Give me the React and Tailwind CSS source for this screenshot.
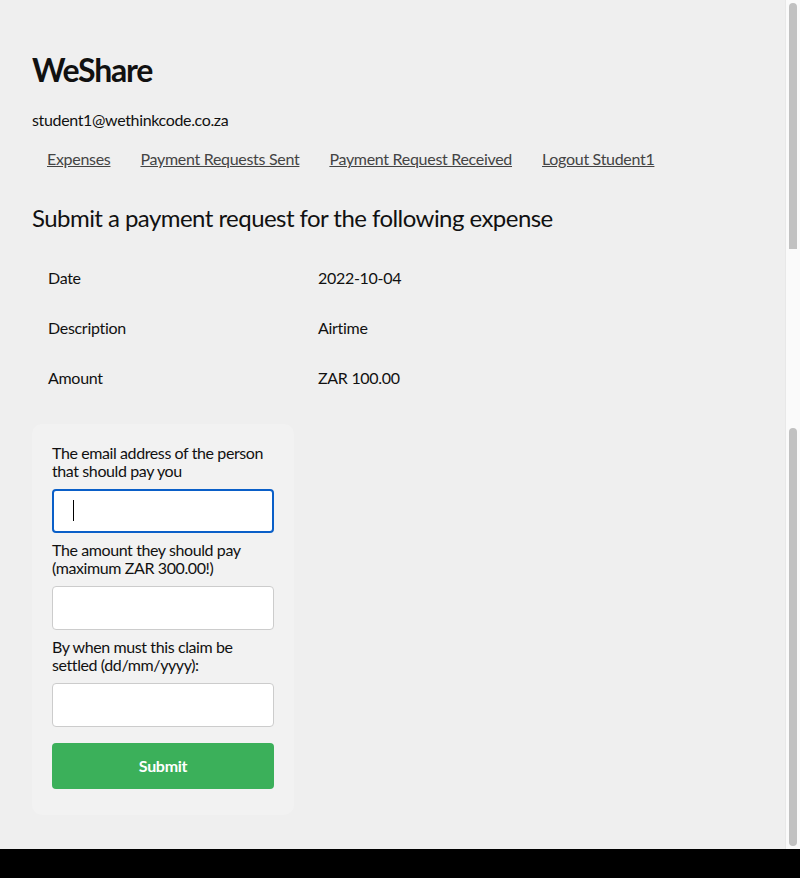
import React from 'react'

const FONT = { fontFamily: '"Lato", "Noto Sans", sans-serif' }

const rows = [
  ['Date', '2022-10-04'],
  ['Description', 'Airtime'],
  ['Amount', 'ZAR 100.00'],
]

const links = ['Expenses', 'Payment Requests Sent', 'Payment Request Received', 'Logout Student1']

function Field({ label, focused }) {
  return (
    <div>
      <label className="block text-[16px] leading-[18px] tracking-[-0.4px] text-[#111] mb-[9px]">{label}</label>
      <div className="relative mb-[8px]">
        <input
          type="text"
          className={
            focused
              ? 'block w-full h-[44px] bg-white rounded-[4px] border-2 border-[#0a5fc8] outline-none px-[20px]'
              : 'block w-full h-[44px] bg-white rounded-[4px] border border-[#cccccc] outline-none px-[20px]'
          }
        />
        {focused && <span className="absolute left-[21px] top-[11px] w-[1px] h-[21px] bg-black" />}
      </div>
    </div>
  )
}

export default function App() {
  return (
    <div className="h-[878px] flex flex-col bg-black" style={FONT}>
      <div className="h-[849px] flex bg-[#efefef]">
        <div className="flex-1 overflow-hidden pl-[32px] pt-[50px]">
          <h1 className="text-[32px] leading-[40px] font-bold tracking-[-1.2px] text-[#111]">WeShare</h1>
          <p className="mt-[18px] text-[16px] leading-[24px] tracking-[-0.35px] text-[#111]">student1@wethinkcode.co.za</p>

          {/* nav */}
          <nav className="mt-[15px] flex">
            {links.map((l) => (
              <a key={l} href="#" className="px-[15px] text-[16px] leading-[24px] tracking-[-0.3px] text-[#444] underline">
                {l}
              </a>
            ))}
          </nav>

          <h2 className="mt-[31px] text-[24px] leading-[32px] tracking-[-0.55px] text-[#111]">
            Submit a payment request for the following expense
          </h2>

          <div className="mt-[19px]">
            {rows.map(([k, v]) => (
              <div key={k} className="flex h-[50px] items-center text-[16px] tracking-[-0.3px] text-[#111]">
                <span className="w-[286px] pl-[16px]">{k}</span>
                <span>{v}</span>
              </div>
            ))}
          </div>

          {/* form */}
          <div className="mt-[21px] w-[262px] bg-[#f2f2f2] rounded-[10px] pt-[20px] px-[20px] pb-[26px]">
            <Field label="The email address of the person that should pay you" focused />
            <Field label="The amount they should pay (maximum ZAR 300.00!)" />
            <Field label="By when must this claim be settled (dd/mm/yyyy):" />
            <button className="mt-[8px] w-full h-[46px] bg-[#3bb05a] text-white font-bold text-[16px] tracking-[-0.3px] rounded-[4px]">
              Submit
            </button>
          </div>
        </div>

        {/* scrollbar */}
        <div className="w-[15px] bg-[#fafafa] border-l border-[#e8e8e8] flex flex-col pt-[3px] pb-[3px] pl-[3px] pr-[3px]">
          <div className="h-[246px] bg-[#c1c1c1] rounded-t-[4px]" />
          <div className="flex-1" />
          <div className="h-[418px] bg-[#c1c1c1] rounded-[4px]" />
        </div>
      </div>
    </div>
  )
}
